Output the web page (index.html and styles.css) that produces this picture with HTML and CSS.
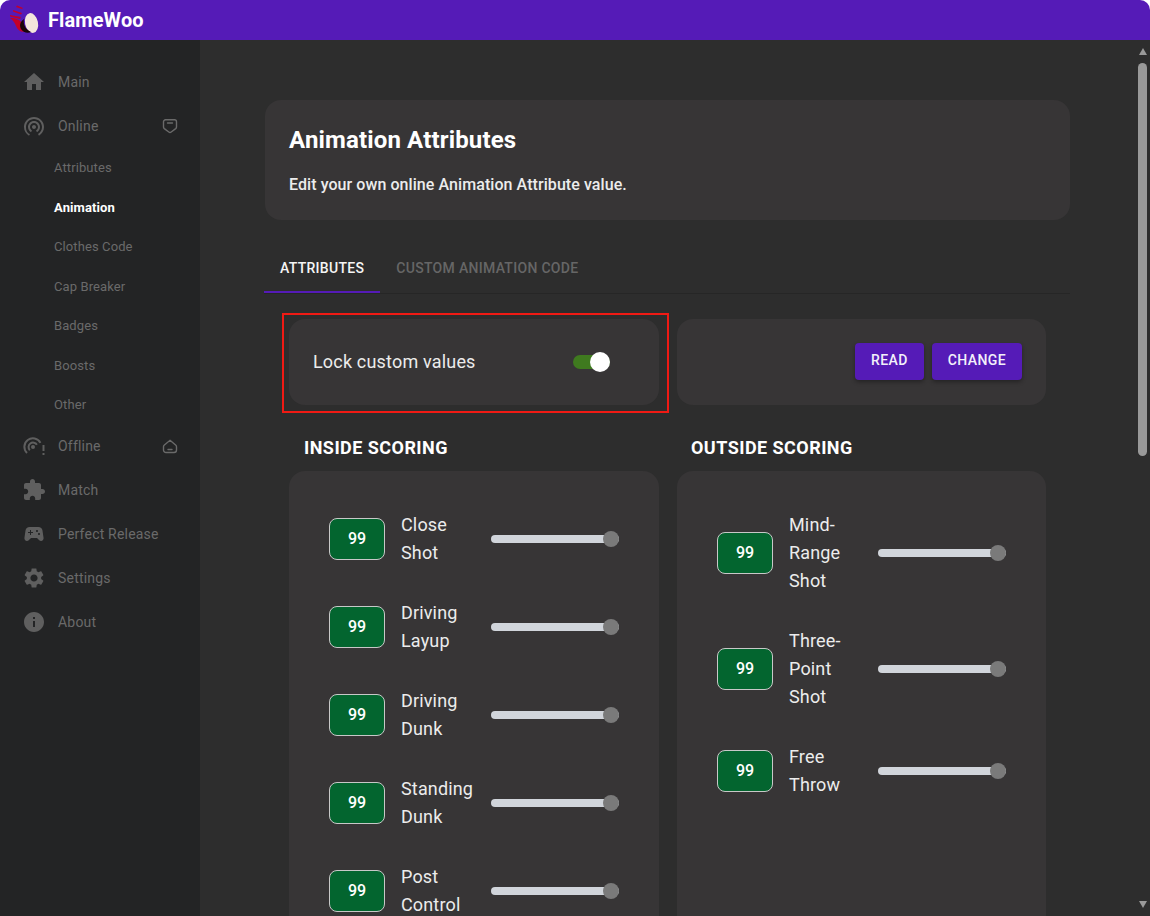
FILE: index.html
```html
<!DOCTYPE html>
<html>
<head>
    <meta charset="UTF-8">
    <title>FlameWoo</title>
    <link rel="stylesheet" href="styles.css">
</head>
<body>
    <div class="app">
        <header class="topbar">
            <svg class="logo" viewBox="0 0 30 30">
                <ellipse cx="21.500" cy="18" rx="6.500" ry="10" transform="rotate(-12 21.500 18)" fill="#f3e6dc"/>
                <path d="M0 13c6 0 10 2 12 5 1 3 2 6 5 8-5 2-9 0-11-5-1-3-3-6-6-8z" fill="#c4002a"/>
                <path d="M14 14c-1 5 1 10 7 13-4 2-8 0-10-3-1.500-3-1.500-7 3-10z" fill="#1a0508"/>
                <path d="M7 .5l6 2.500-1 1-6-2zM3 5l9 3-1 1.500-8-3zM0 10l11 2-1 2-10-2.500z" fill="#c4002a"/>
            </svg>
            <span class="brand">FlameWoo</span>
        </header>
        <div class="layout">
            <nav class="sidebar">
                <a class="nav-item">
                    <svg class="nav-icon" viewBox="0 0 24 24"><path d="M10 20v-6h4v6h5v-8h3L12 3 2 12h3v8z"/></svg>
                    <span>Main</span>
                </a>
                <a class="nav-item">
                    <svg class="nav-icon" viewBox="0 0 24 24"><path d="M12 11c-1.100 0-2 .9-2 2s.9 2 2 2 2-.9 2-2-.9-2-2-2zm6 2c0-3.310-2.690-6-6-6s-6 2.690-6 6c0 2.220 1.210 4.150 3 5.190l1-1.740c-1.190-.7-2-1.970-2-3.450 0-2.210 1.790-4 4-4s4 1.790 4 4c0 1.480-.81 2.750-2 3.450l1 1.740c1.790-1.040 3-2.970 3-5.190zM12 3C6.480 3 2 7.480 2 13c0 3.700 2.010 6.920 4.990 8.650l1-1.730C5.610 19.530 4 16.960 4 13c0-4.420 3.580-8 8-8s8 3.580 8 8c0 2.960-1.610 5.530-4 6.920l1 1.730c2.990-1.730 5-4.950 5-8.650 0-5.520-4.480-10-10-10z"/></svg>
                    <span>Online</span>
                    <svg class="nav-badge" viewBox="0 0 16 16"><path d="M3.500 1.800h9a2 2 0 0 1 2 2V9c0 .7-.3 1.200-.8 1.600l-4.500 3.400c-.5.4-1.900.4-2.400 0l-4.500-3.400c-.5-.4-.8-.9-.8-1.600V3.800a2 2 0 0 1 2-2z"/><path d="M5.500 5h5"/></svg>
                </a>
                <div class="subnav">
                    <a class="sub-item">Attributes</a>
                    <a class="sub-item active">Animation</a>
                    <a class="sub-item">Clothes Code</a>
                    <a class="sub-item">Cap Breaker</a>
                    <a class="sub-item">Badges</a>
                    <a class="sub-item">Boosts</a>
                    <a class="sub-item">Other</a>
                </div>
                <a class="nav-item">
                    <svg class="nav-icon nav-icon-line" viewBox="0 0 24 24">
                        <circle class="dot" cx="11" cy="13" r="2"/>
                        <path d="M7.800 16.200A4.500 4.500 0 1 1 14.900 10.750"/>
                        <path d="M5 19A8.500 8.500 0 1 1 18.400 8.900"/>
                        <path d="M21.500 11v6M21.500 19v2"/>
                    </svg>
                    <span>Offline</span>
                    <svg class="nav-badge" viewBox="0 0 16 16"><path d="M8 2.300 13.600 7c.6.5.9 1.100.9 1.800V12a2.500 2.500 0 0 1-2.500 2.500H4A2.500 2.500 0 0 1 1.500 12V8.800c0-.7.3-1.300.9-1.800z"/><path d="M6 11.500h4"/></svg>
                </a>
                <a class="nav-item">
                    <svg class="nav-icon" viewBox="0 0 24 24"><path d="M20.500 11H19V7c0-1.100-.9-2-2-2h-4V3.500C13 2.120 11.880 1 10.500 1S8 2.120 8 3.500V5H4c-1.100 0-1.990.9-1.990 2v3.800H3.500c1.490 0 2.700 1.210 2.700 2.700s-1.210 2.700-2.700 2.700H2V20c0 1.100.9 2 2 2h3.800v-1.500c0-1.490 1.210-2.700 2.700-2.700 1.490 0 2.700 1.210 2.700 2.700V22H17c1.100 0 2-.9 2-2v-4h1.500c1.380 0 2.500-1.120 2.500-2.500S21.880 11 20.500 11z"/></svg>
                    <span>Match</span>
                </a>
                <a class="nav-item">
                    <svg class="nav-icon" viewBox="0 0 24 24"><path d="M21.580 16.090l-1.090-7.660C20.210 6.460 18.520 5 16.530 5H7.470C5.480 5 3.790 6.460 3.510 8.430l-1.090 7.660C2.200 17.630 3.390 19 4.940 19c.68 0 1.320-.27 1.800-.75L9 16h6l2.250 2.250c.48.48 1.130.75 1.800.75 1.560 0 2.750-1.370 2.530-2.910zM11 11H9v2H8v-2H6v-1h2V8h1v2h2v1zm4-1c-.55 0-1-.45-1-1s.45-1 1-1 1 .45 1 1-.45 1-1 1zm2 3c-.55 0-1-.45-1-1s.45-1 1-1 1 .45 1 1-.45 1-1 1z"/></svg>
                    <span>Perfect Release</span>
                </a>
                <a class="nav-item">
                    <svg class="nav-icon" viewBox="0 0 24 24"><path d="M19.140 12.940c.04-.3.06-.61.06-.94 0-.32-.02-.64-.07-.94l2.030-1.580c.18-.14.23-.41.12-.61l-1.920-3.320c-.12-.22-.37-.29-.59-.22l-2.390.96c-.5-.38-1.030-.7-1.620-.94l-.36-2.540c-.04-.24-.24-.41-.48-.41h-3.840c-.24 0-.43.17-.47.41l-.36 2.540c-.59.24-1.130.57-1.620.94l-2.390-.96c-.22-.08-.47 0-.59.22L2.740 8.870c-.12.21-.08.47.12.61l2.030 1.580c-.05.3-.09.63-.09.94s.02.64.07.94l-2.030 1.580c-.18.14-.23.41-.12.61l1.920 3.320c.12.22.37.29.59.22l2.390-.96c.5.38 1.030.7 1.620.94l.36 2.540c.05.24.24.41.48.41h3.840c.24 0 .44-.17.47-.41l.36-2.540c.59-.24 1.130-.56 1.620-.94l2.390.96c.22.08.47 0 .59-.22l1.920-3.320c.12-.22.07-.47-.12-.61l-2.010-1.580zM12 15.600c-1.980 0-3.600-1.620-3.600-3.600s1.620-3.600 3.600-3.600 3.600 1.620 3.600 3.600-1.620 3.600-3.600 3.600z"/></svg>
                    <span>Settings</span>
                </a>
                <a class="nav-item">
                    <svg class="nav-icon" viewBox="0 0 24 24"><path d="M12 2C6.480 2 2 6.480 2 12s4.480 10 10 10 10-4.480 10-10S17.520 2 12 2zm1 15h-2v-6h2v6zm0-8h-2V7h2v2z"/></svg>
                    <span>About</span>
                </a>
            </nav>

            <main class="content">
                <section class="intro-card">
                    <h1>Animation Attributes</h1>
                    <p>Edit your own online Animation Attribute value.</p>
                </section>

                <div class="tabs">
                    <button class="tab active">Attributes</button>
                    <button class="tab">Custom Animation Code</button>
                </div>

                <div class="columns">
                    <div class="card lock-card">
                        <span class="lock-label">Lock custom values</span>
                        <span class="switch"><span class="switch-knob"></span></span>
                        <div class="highlight"></div>
                    </div>
                    <div class="card action-card">
                        <button class="btn">Read</button>
                        <button class="btn">Change</button>
                    </div>

                    <div class="group">
                        <h2>Inside Scoring</h2>
                        <div class="card attr-card">
                            <div class="attr-row"><span class="attr-value">99</span><span class="attr-name">Close Shot</span><input class="attr-slider" type="range" min="0" max="99" value="99"></div>
                            <div class="attr-row"><span class="attr-value">99</span><span class="attr-name">Driving Layup</span><input class="attr-slider" type="range" min="0" max="99" value="99"></div>
                            <div class="attr-row"><span class="attr-value">99</span><span class="attr-name">Driving Dunk</span><input class="attr-slider" type="range" min="0" max="99" value="99"></div>
                            <div class="attr-row"><span class="attr-value">99</span><span class="attr-name">Standing Dunk</span><input class="attr-slider" type="range" min="0" max="99" value="99"></div>
                            <div class="attr-row"><span class="attr-value">99</span><span class="attr-name">Post Control</span><input class="attr-slider" type="range" min="0" max="99" value="99"></div>
                        </div>
                    </div>
                    <div class="group">
                        <h2>Outside Scoring</h2>
                        <div class="card attr-card">
                            <div class="attr-row"><span class="attr-value">99</span><span class="attr-name">Mind-Range Shot</span><input class="attr-slider" type="range" min="0" max="99" value="99"></div>
                            <div class="attr-row"><span class="attr-value">99</span><span class="attr-name">Three-Point Shot</span><input class="attr-slider" type="range" min="0" max="99" value="99"></div>
                            <div class="attr-row"><span class="attr-value">99</span><span class="attr-name">Free Throw</span><input class="attr-slider" type="range" min="0" max="99" value="99"></div>
                        </div>
                    </div>
                </div>
            </main>

            <div class="scrollbar">
                <span class="arrow-up"></span>
                <span class="scroll-track"><span class="scroll-thumb"></span></span>
                <span class="arrow-down"></span>
            </div>
        </div>
    </div>
</body>
</html>
```

FILE: styles.css
```css
* {
    box-sizing: border-box;
}

html, body {
    margin: 0;
    height: 100%;
    background-color: #fff;
    overflow: hidden;
}

body {
    font-family: Roboto, "Liberation Sans", sans-serif;
}

.app {
    height: 916px;
    display: flex;
    flex-direction: column;
    overflow: hidden;
    border-radius: 10px 10px 0 0;
}

/* Top bar */
.topbar {
    height: 40px;
    flex: none;
    display: flex;
    align-items: center;
    gap: 8px;
    padding-left: 10px;
    background-color: #551bb7;
}

.logo {
    width: 30px;
    height: 30px;
}

.brand {
    color: #fff;
    font-size: 20px;
    font-weight: 700;
    letter-spacing: 0.1px;
}

.layout {
    flex: 1;
    display: flex;
    min-height: 0;
}

/* Sidebar */
.sidebar {
    width: 200px;
    flex: none;
    padding-top: 20px;
    background-color: #232425;
    color: #6a6a6a;
}

.nav-item {
    height: 44px;
    display: flex;
    align-items: center;
    padding: 0 22px;
    font-size: 14px;
    letter-spacing: 0.2px;
}

.nav-icon {
    width: 24px;
    height: 24px;
    margin-right: 12px;
    flex: none;
    fill: #5f5f5f;
}

.nav-icon-line {
    fill: none;
    stroke: #5f5f5f;
    stroke-width: 2;
}

.nav-icon-line .dot {
    fill: #5f5f5f;
    stroke: none;
}

.nav-badge {
    width: 16px;
    height: 16px;
    margin-left: auto;
    fill: none;
    stroke: #6a6a6a;
    stroke-width: 1.4;
    stroke-linecap: round;
}

.subnav {
    height: 276px;
}

.sub-item {
    height: 39.5px;
    display: flex;
    align-items: center;
    padding-left: 54px;
    font-size: 13px;
    letter-spacing: 0.1px;
}

.sub-item.active {
    color: #fff;
    font-weight: 700;
}

/* Main area */
.content {
    flex: 1;
    min-width: 0;
    padding: 60px 67px 0 65px;
    background-color: #2d2d2d;
    overflow: hidden;
    color: #ececec;
}

.intro-card {
    height: 120px;
    padding: 24px;
    border-radius: 16px;
    background-color: #373536;
}

.intro-card h1 {
    margin: 0 0 17px;
    font-size: 24px;
    line-height: 32px;
    font-weight: 700;
    letter-spacing: 0.15px;
    color: #fff;
}

.intro-card p {
    margin: 0;
    font-size: 16px;
    line-height: 24px;
    font-weight: 500;
    letter-spacing: 0.07px;
}

.tabs {
    display: flex;
    height: 49px;
    margin: 25px 0 0 -1px;
    border-bottom: 1px solid #262626;
}

.tab {
    height: 48px;
    padding: 0 16px;
    border: none;
    border-bottom: 2px solid transparent;
    background: none;
    font-family: inherit;
    font-size: 14px;
    font-weight: 500;
    letter-spacing: 0.3px;
    text-transform: uppercase;
    color: #666;
}

.tab.active {
    color: #f5f5f5;
    border-bottom-color: #551bb7;
}

.columns {
    display: grid;
    grid-template-columns: 370px 369px;
    column-gap: 18px;
    margin: 25px 0 0 24px;
}

.card {
    border-radius: 16px;
    background-color: #373536;
}

.lock-card {
    position: relative;
    height: 86px;
    display: flex;
    align-items: center;
    padding: 0 49px 0 24px;
    justify-content: space-between;
    font-size: 18px;
    letter-spacing: 0.18px;
}

.lock-label {
    margin-bottom: 2px;
}

/* red annotation frame around the lock card */
.highlight {
    position: absolute;
    inset: -6px -10px -8px -7px;
    border: 2px solid #f01a14;
    pointer-events: none;
}

.switch {
    position: relative;
    width: 37px;
    height: 14px;
    border-radius: 7px;
    background-color: #3f7a1f;
}

.switch-knob {
    position: absolute;
    top: -3px;
    right: 0;
    width: 20px;
    height: 20px;
    border-radius: 50%;
    background-color: #fff;
}

.action-card {
    height: 86px;
    display: flex;
    align-items: center;
    justify-content: flex-end;
    gap: 8px;
    padding: 0 24px 2px 0;
}

.btn {
    height: 37px;
    padding: 0 16px 2px;
    border: none;
    border-radius: 4px;
    background-color: #551bb7;
    color: #f3f0fa;
    font-family: inherit;
    font-size: 14px;
    font-weight: 500;
    letter-spacing: 0.4px;
    text-transform: uppercase;
    box-shadow: 0 2px 4px rgba(0, 0, 0, 0.35);
}

.group h2 {
    margin: 31px 0 11px 15px;
    font-size: 18px;
    line-height: 24px;
    font-weight: 700;
    letter-spacing: 0.45px;
    color: #fff;
    text-transform: uppercase;
}

.group + .group h2 {
    margin-left: 14px;
}

.attr-card {
    min-height: 500px;
    padding: 40px;
    display: flex;
    flex-direction: column;
    gap: 32px;
}

.attr-row {
    display: flex;
    align-items: center;
}

.attr-value {
    width: 56px;
    height: 42px;
    flex: none;
    display: flex;
    align-items: center;
    justify-content: center;
    margin-right: 16px;
    padding: 0 0 2px;
    border: 1px solid #c8c8c8;
    border-radius: 8px;
    background-color: #03652f;
    color: #fff;
    font-size: 16px;
    font-weight: 500;
}

.attr-name {
    flex: 1;
    padding-right: 15px;
    font-size: 18px;
    line-height: 28px;
    letter-spacing: 0.15px;
}

.attr-slider {
    width: 128px;
    height: 16px;
    flex: none;
    margin: 0;
    background: none;
    -webkit-appearance: none;
    appearance: none;
}

.attr-slider::-webkit-slider-runnable-track {
    height: 8px;
    border-radius: 4px;
    background-color: #d1d5db;
}

.attr-slider::-webkit-slider-thumb {
    width: 16px;
    height: 16px;
    margin-top: -4px;
    border-radius: 50%;
    background-color: #7a7a7a;
    -webkit-appearance: none;
    appearance: none;
}

/* Scrollbar */
.scrollbar {
    width: 13px;
    flex: none;
    display: flex;
    flex-direction: column;
    align-items: center;
    padding: 8px 3px 0 1px;
    background-color: #2d2d2d;
}

.arrow-up,
.arrow-down {
    flex: none;
    border-left: 4.5px solid transparent;
    border-right: 4.5px solid transparent;
}

.arrow-up {
    border-bottom: 7px solid #999;
}

.arrow-down {
    border-top: 7px solid #999;
    margin-bottom: 8px;
}

.scroll-track {
    flex: 1;
    width: 9px;
    padding-top: 8px;
}

.scroll-thumb {
    display: block;
    height: 393px;
    border-radius: 5px;
    background-color: #999;
}
```
